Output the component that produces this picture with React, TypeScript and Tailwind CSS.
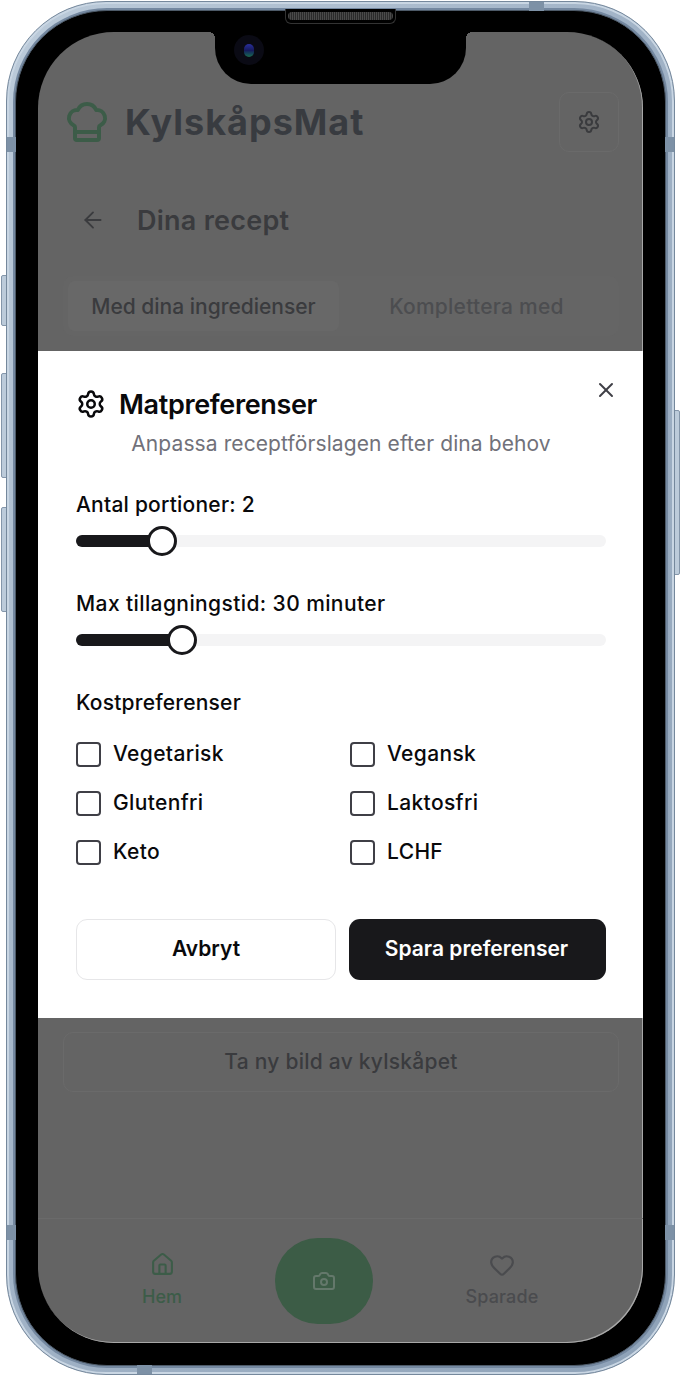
import { ArrowLeft, Camera, ChefHat, Heart, House, Settings, X } from "lucide-react";

function Range({ label, pct, className, tracking }: { label: string; pct: number; className?: string; tracking: string }) {
  return (
    <div className={className}>
      <div className={`text-[21px] leading-[28px] font-medium text-[#09090b] ${tracking}`}>{label}</div>
      <div className="relative mt-[16px] h-[12px] rounded-full bg-[#f4f4f5]">
        <div className="h-full rounded-full bg-[#18181b]" style={{ width: `${pct}%` }} />
        <div
          className="absolute top-1/2 h-[30px] w-[30px] -translate-x-1/2 -translate-y-1/2 rounded-full border-[3px] border-[#18181b] bg-white"
          style={{ left: `${pct}%` }}
        />
      </div>
    </div>
  );
}

function Check({ label }: { label: string }) {
  return (
    <div className="flex h-[25px] items-center gap-[12px]">
      <div className="h-[25px] w-[25px] rounded-[4px] border-2 border-[#3f3f46] bg-white" />
      <span className="mb-[2px] text-[21px] leading-[25px] font-medium tracking-[0.35px] text-[#09090b]">{label}</span>
    </div>
  );
}

function Band({ className }: { className: string }) {
  return <div className={`absolute bg-[#7d91a6] ${className}`} />;
}

function SideButton({ className }: { className: string }) {
  return <div className={`absolute w-[6px] border border-[#8496aa] bg-[#bccbda] ${className}`} />;
}

export default function App() {
  return (
    <div className="relative h-[1376px] w-[681px] overflow-hidden bg-white pt-[1px] [font-family:Inter,'Noto_Sans',sans-serif]">
      {/* side buttons */}
      <SideButton className="left-[1px] top-[275px] h-[51px] rounded-l-[2px]" />
      <SideButton className="left-[1px] top-[373px] h-[105px] rounded-l-[2px]" />
      <SideButton className="left-[1px] top-[507px] h-[105px] rounded-l-[2px]" />
      <SideButton className="left-[674px] top-[410px] h-[165px] rounded-r-[2px]" />

      {/* phone frame */}
      <div className="relative ml-[6px] h-[1374px] w-[669px] rounded-[100px] border border-[#75889c] bg-gradient-to-br from-[#bccbda] via-[#a0b2c6] to-[#8ea2b8] p-[8px] shadow-[inset_0_0_0_2px_#c9d6e3]">
        <Band className="left-0 top-[135px] h-[15px] w-[9px]" />
        <Band className="right-0 top-[135px] h-[15px] w-[9px]" />
        <Band className="left-0 top-[1223px] h-[15px] w-[9px]" />
        <Band className="right-0 top-[1223px] h-[15px] w-[9px]" />
        <Band className="left-[522px] top-0 h-[9px] w-[15px]" />
        <Band className="bottom-0 left-[130px] h-[9px] w-[15px]" />

        <div className="h-full w-full rounded-[92px] border border-[#4d5a68] bg-black pb-[22px] pl-[22px] pr-[22px] pt-[21px] shadow-[0_0_0_2px_#7488a0]">
          {/* screen */}
          <div className="relative flex h-[1311px] w-[605px] flex-col overflow-hidden rounded-[76px] bg-[#646464] shadow-[inset_-1px_-1px_0_#a8a8a8]">
            {/* notch */}
            <div className="absolute left-[177px] top-0 z-20 h-[52px] w-[251px] rounded-b-[36px] bg-black" />
            <div className="absolute left-[171px] top-0 z-20 h-[6px] w-[6px] bg-[radial-gradient(circle_at_0_100%,transparent_6px,black_6px)]" />
            <div className="absolute left-[428px] top-0 z-20 h-[6px] w-[6px] bg-[radial-gradient(circle_at_100%_100%,transparent_6px,black_6px)]" />
            <div className="absolute left-[196px] top-[3px] z-30 flex h-[30px] w-[30px] items-center justify-center rounded-full bg-[#0a0a14]">
              <div className="h-[13px] w-[10px] rounded-full bg-gradient-to-b from-[#2a2f9c] via-[#161a5c] to-[#1d6a4a]" />
            </div>

            {/* header */}
            <div className="ml-[25px] mr-[24px] mt-[60px] flex h-[60px] items-center justify-between">
              <div className="flex items-center gap-[14px]">
                <ChefHat size={48} strokeWidth={2} className="text-[#3c5c48]" />
                <span className="text-[36px] font-bold leading-none tracking-[1px] text-[#383b40]">KylskåpsMat</span>
              </div>
              <div className="flex h-[60px] w-[60px] items-center justify-center rounded-[10px] border border-[#6a6a6a]">
                <Settings size={24} strokeWidth={2} className="text-[#3a3b3e]" />
              </div>
            </div>

            {/* title */}
            <div className="ml-[42px] mt-[48px] flex h-[40px] items-center gap-[31px]">
              <ArrowLeft size={26} strokeWidth={1.7} className="text-[#3a3b3e]" />
              <span className="text-[27px] font-semibold leading-none tracking-[0.25px] text-[#3a3b3e]">Dina recept</span>
            </div>

            {/* tabs */}
            <div className="ml-[25px] mr-[24px] mt-[36px] flex h-[60px] gap-[2px] rounded-[10px] bg-[#656565] p-[5px]">
              <div className="flex flex-1 items-center justify-center rounded-[7px] bg-[#686868] pt-[2px] text-[21px] font-medium text-[#3a3b3e]">
                Med dina ingredienser
              </div>
              <div className="flex flex-1 items-center justify-center pr-[2px] pt-[2px] text-[21px] font-medium tracking-[0.25px] text-[#4c4d50]">
                Komplettera med
              </div>
            </div>

            {/* lower button */}
            <div className="ml-[25px] mr-[24px] mt-[696px] flex h-[60px] items-center justify-center rounded-[10px] border border-[#6a6a6a] text-[21px] font-medium tracking-[0.25px] text-[#3a3b3e]">
              Ta ny bild av kylskåpet
            </div>

            {/* bottom nav */}
            <div className="mt-auto flex h-[125px] items-start border-t border-[#6a6a6a] pl-[84px]">
              <div className="mt-[33px] flex w-[80px] flex-col items-center">
                <House size={25} strokeWidth={2} className="text-[#3c5c48]" />
                <span className="mt-[7px] text-[18px] font-medium leading-[26px] text-[#3c5c48]">Hem</span>
              </div>
              <div className="ml-[73px] mt-[19px] flex h-[86px] w-[98px] items-center justify-center rounded-full bg-[#3c5c46]">
                <Camera size={24} strokeWidth={2} className="text-[#64786b]" />
              </div>
              <div className="ml-[89px] mt-[33px] flex w-[80px] flex-col items-center">
                <Heart size={26} strokeWidth={2} className="text-[#4a4b4e]" />
                <span className="mt-[6px] text-[18px] font-medium leading-[26px] tracking-[0.15px] text-[#4a4b4e]">Sparade</span>
              </div>
            </div>

            {/* dialog */}
            <div className="absolute left-0 top-[319px] z-10 h-[667px] w-[605px] bg-white pl-[38px] pr-[37px] pt-[37px]">
              <X size={24} strokeWidth={2} className="absolute right-[25px] top-[27px] text-[#3f3f46]" />
              <div className="flex h-[32px] items-center gap-[14px]">
                <Settings size={30} strokeWidth={2} className="text-[#09090b]" />
                <span className="-ml-[1px] text-[27px] font-semibold leading-none tracking-[-0.35px] text-[#09090b]">Matpreferenser</span>
              </div>
              <p className="mt-[10px] text-center text-[21px] leading-[28px] tracking-[0.1px] text-[#71717a]">
                Anpassa receptförslagen efter dina behov
              </p>
              <Range className="mt-[33px]" tracking="tracking-[0.22px]" label="Antal portioner: 2" pct={16.3} />
              <Range className="mt-[43px]" tracking="tracking-[0.4px]" label="Max tillagningstid: 30 minuter" pct={20} />
              <div className="mt-[43px] text-[21px] leading-[28px] font-medium tracking-[0.2px] text-[#09090b]">Kostpreferenser</div>
              <div className="mt-[25px] grid grid-cols-2 gap-x-[18px] gap-y-[24px]">
                <Check label="Vegetarisk" />
                <Check label="Vegansk" />
                <Check label="Glutenfri" />
                <Check label="Laktosfri" />
                <Check label="Keto" />
                <Check label="LCHF" />
              </div>
              <div className="mt-[54px] flex gap-[13px]">
                <div className="flex h-[61px] w-[260px] items-center justify-center rounded-[11px] border-[1.5px] border-[#e6e6e8] bg-white pb-[2px] text-[21px] font-semibold text-[#09090b]">
                  Avbryt
                </div>
                <div className="flex h-[61px] flex-1 items-center justify-center rounded-[11px] bg-[#18181b] pb-[2px] pr-[2px] text-[21px] font-semibold text-white">
                  Spara preferenser
                </div>
              </div>
            </div>
          </div>
        </div>
      </div>

      {/* speaker */}
      <div className="absolute left-[285px] top-[9px] z-30 flex h-[15px] w-[111px] items-center justify-center rounded-b-[6px] border border-t-0 border-[#333333] bg-black">
        <div className="h-[8px] w-[105px] rounded-full bg-[repeating-linear-gradient(90deg,#4a4a4a_0_1px,#2a2a2a_1px_2px)]" />
      </div>
    </div>
  );
}
